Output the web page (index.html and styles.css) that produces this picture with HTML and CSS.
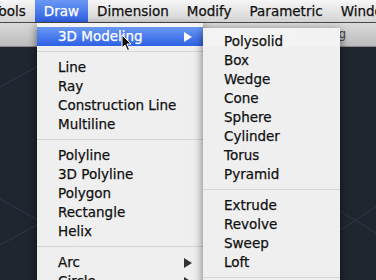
FILE: index.html
```html
<!DOCTYPE html>
<html lang="en">
<head>
    <meta charset="UTF-8">
    <title>Draw menu</title>
    <link rel="stylesheet" href="styles.css">
</head>
<body>
    <div class="screen">
        <div class="menubar">
            <span class="menu-title first">Tools</span>
            <span class="menu-title active">Draw</span>
            <span class="menu-title">Dimension</span>
            <span class="menu-title">Modify</span>
            <span class="menu-title">Parametric</span>
            <span class="menu-title">Window</span>
        </div>
        <div class="toolbar"><span class="toolbar-label">Drawing</span></div>
        <div class="canvas">
            <svg class="grid" width="376" height="234" viewBox="0 0 376 234">
                <line x1="0" y1="152" x2="80" y2="196" />
                <line x1="0" y1="198" x2="80" y2="154" />
                <line x1="320" y1="152" x2="376" y2="186" />
                <line x1="320" y1="196" x2="376" y2="160" />
                <line x1="0" y1="40" x2="40" y2="18" />
            </svg>
        </div>

        <div class="menu draw-menu">
            <div class="item selected">3D Modeling <span class="arrow"></span></div>
            <div class="sep"></div>
            <div class="item">Line</div>
            <div class="item">Ray</div>
            <div class="item">Construction Line</div>
            <div class="item">Multiline</div>
            <div class="sep"></div>
            <div class="item">Polyline</div>
            <div class="item">3D Polyline</div>
            <div class="item">Polygon</div>
            <div class="item">Rectangle</div>
            <div class="item">Helix</div>
            <div class="sep"></div>
            <div class="item">Arc <span class="arrow"></span></div>
            <div class="item">Circle <span class="arrow"></span></div>
        </div>

        <div class="menu sub-menu">
            <div class="item">Polysolid</div>
            <div class="item">Box</div>
            <div class="item">Wedge</div>
            <div class="item">Cone</div>
            <div class="item">Sphere</div>
            <div class="item">Cylinder</div>
            <div class="item">Torus</div>
            <div class="item">Pyramid</div>
            <div class="sep"></div>
            <div class="item">Extrude</div>
            <div class="item">Revolve</div>
            <div class="item">Sweep</div>
            <div class="item">Loft</div>
            <div class="sep"></div>
            <div class="item">Section</div>
        </div>

        <svg class="cursor" width="12" height="18" viewBox="0 0 12 18">
            <path d="M1 1 L1 14 L4 11 L6.5 16.5 L8.5 15.5 L6 10 L10 10 Z" fill="#111" stroke="#fff" stroke-width="1" stroke-linejoin="round" />
        </svg>
    </div>
</body>
</html>
```

FILE: styles.css
```css
body {
    margin: 0;
    font-family: "DejaVu Sans", "Liberation Sans", sans-serif;
    font-size: 13.5px;
    color: #111;
    -webkit-text-stroke: 0.25px;
}
.screen {
    position: relative;
    width: 376px;
    height: 280px;
    overflow: hidden;
    background: #1f2630;
}
.menubar {
    display: flex;
    height: 22px;
    background: linear-gradient(#f6f6f6, #d4d4d4);
    border-bottom: 1px solid #4a4a4a;
    white-space: nowrap;
}
.menu-title {
    padding: 0 9px;
    line-height: 22px;
}
.menu-title.first {
    margin-left: -16.5px;
}
.menu-title.active {
    background: linear-gradient(#6a98f3, #2d61e4);
    color: #fff;
}
.toolbar {
    height: 23px;
    background: linear-gradient(#dadada, #bcbcbc);
    border-bottom: 1px solid #8a8a8a;
    display: flex;
    justify-content: flex-end;
    padding-right: 30px;
    line-height: 22px;
    font-size: 12px;
    color: #444;
    -webkit-text-stroke: 0;
}
.canvas {
    height: 234px;
}
.grid line {
    stroke: #2f3946;
    stroke-width: 1;
}
.menu {
    position: absolute;
    background: rgba(244, 244, 244, 0.98);
    box-shadow: 0 3px 9px rgba(0, 0, 0, 0.55);
    padding: 4px 0;
}
.draw-menu {
    left: 37px;
    top: 23px;
    width: 166px;
}
.sub-menu {
    left: 203px;
    top: 28px;
    width: 137px;
}
.item {
    height: 19px;
    line-height: 19px;
    padding-left: 21px;
    position: relative;
    white-space: nowrap;
}
.item.selected {
    background: linear-gradient(#6a98f3, #2d61e4);
    color: #fff;
}
.sep {
    height: 1px;
    background: #d6d6d6;
    margin: 5px 0 6px;
}
.arrow {
    position: absolute;
    right: 11px;
    top: 5px;
    width: 0;
    height: 0;
    border-top: 5px solid transparent;
    border-bottom: 5px solid transparent;
    border-left: 8px solid #333;
}
.selected .arrow {
    border-left-color: #fff;
}
.cursor {
    position: absolute;
    left: 121px;
    top: 34px;
}
```
